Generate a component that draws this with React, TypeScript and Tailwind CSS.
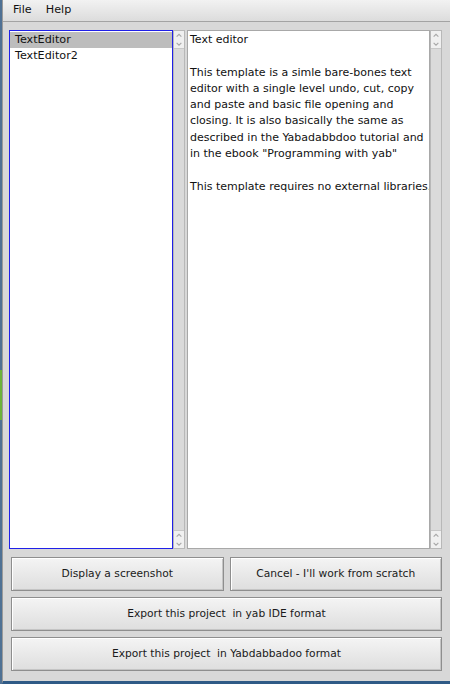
import React from "react";

const FONT = { fontFamily: '"DejaVu Sans", "Noto Sans", sans-serif' };

function Arrows() {
  return (
    <div className="flex flex-col items-center">
      <svg width="10" height="9" viewBox="0 0 10 9">
        <path d="M2.5 6 L5 3.5 L7.5 6" fill="none" stroke="#a8a8a8" strokeWidth="1.2" />
      </svg>
      <svg width="10" height="9" viewBox="0 0 10 9">
        <path d="M2.5 3 L5 5.5 L7.5 3" fill="none" stroke="#a8a8a8" strokeWidth="1.2" />
      </svg>
    </div>
  );
}

function ScrollBar() {
  return (
    <div className="w-[12px] shrink-0 flex flex-col border border-[#b8b8b8] bg-[#e6e6e6]">
      <div className="h-[18px] bg-[#f0f0f0] border-b border-[#c8c8c8] flex justify-center">
        <Arrows />
      </div>
      <div className="flex-1 bg-[#dadada]" />
      <div className="h-[18px] bg-[#f0f0f0] border-t border-[#c8c8c8] flex justify-center">
        <Arrows />
      </div>
    </div>
  );
}

function Btn({ label, className }: { label: string; className?: string }) {
  return (
    <div
      className={`h-[34px] min-w-0 flex items-center justify-center border border-[#8e8e8e] bg-gradient-to-b from-[#f4f4f4] to-[#dedede] shadow-[inset_1px_1px_0_#ffffff,inset_-1px_-1px_0_#c4c4c4] text-[10.7px] text-[#1a1a1a] ${className ?? ""}`}
    >
      <span className="whitespace-pre">{label}</span>
    </div>
  );
}

export default function App() {
  return (
    <div className="w-[450px] h-[684px] flex bg-[#3d5f82] overflow-hidden" style={FONT}>
      <div className="w-[2px] shrink-0 flex flex-col">
        <div className="h-[370px] bg-[#4f7194]" />
        <div className="h-[50px] bg-[#6cb33a]" />
        <div className="flex-1 bg-[#4f7194]" />
      </div>
      <div className="flex-1 min-w-0 flex flex-col bg-[#d8d8d8] border-l border-[#9a9a9a] border-b-[3px] border-b-[#2f5a86]">
        <div className="h-[22px] flex items-center text-[11.2px] text-[#111] bg-gradient-to-b from-[#f2f2f2] to-[#dcdcdc] border-b border-[#a3a3a3] shrink-0">
          <span className="ml-[10px]">File</span>
          <span className="ml-[14px]">Help</span>
        </div>
        <div className="flex h-[519px] mt-[8px] ml-[6px] mr-[8px] gap-[2px] min-w-0">
          <div className="flex shrink-0">
            <div className="w-[164px] border border-[#2020e8] bg-white pt-[1px] text-[11.2px] text-[#111]">
              <div className="h-[16px] bg-[#bdbdbd] pl-[5px] leading-[16px]">TextEditor</div>
              <div className="h-[16px] pl-[5px] leading-[16px]">TextEditor2</div>
            </div>
            <ScrollBar />
          </div>
          <div className="flex flex-1 min-w-0">
            <div className="flex-1 min-w-0 overflow-hidden border border-[#a8a8a8] bg-white px-[2px] pt-[1px] text-[11px] leading-[16.3px] text-[#111] whitespace-pre">
              {`Text editor

This template is a simle bare-bones text
editor with a single level undo, cut, copy
and paste and basic file opening and
closing. It is also basically the same as
described in the Yabadabbdoo tutorial and
in the ebook "Programming with yab"

This template requires no external libraries.`}
            </div>
            <ScrollBar />
          </div>
        </div>
        <div className="flex flex-col gap-[6px] mt-[8px] ml-[8px] mr-[8px]">
          <div className="flex gap-[6px]">
            <Btn label="Display a screenshot" className="flex-1" />
            <Btn label="Cancel - I'll work from scratch" className="flex-1" />
          </div>
          <Btn label="Export this project  in yab IDE format" />
          <Btn label="Export this project  in Yabdabbadoo format" />
        </div>
      </div>
    </div>
  );
}
